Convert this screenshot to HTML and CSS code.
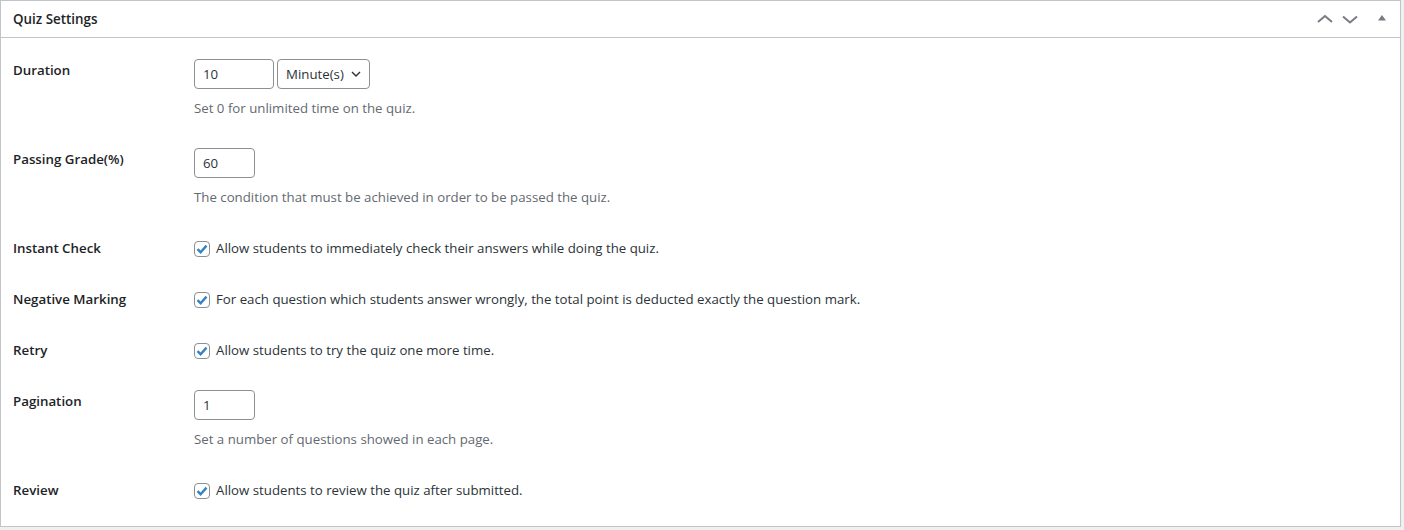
FILE: index.html
```html
<!DOCTYPE html>
<html>
<head>
<meta charset="utf-8">
<link rel="stylesheet" href="styles.css">
</head>
<body>
<div class="postbox">
  <div class="postbox-header">
    <h2 class="hndle">Quiz Settings</h2>
    <div class="handle-actions">
      <svg class="hicon" width="16" height="16" viewBox="0 0 16 16"><path d="M1 11 L8 5 L15 11" fill="none" stroke="#787c82" stroke-width="2"/></svg>
      <svg class="hicon" width="16" height="16" viewBox="0 0 16 16"><path d="M1 5.5 L8 11.5 L15 5.5" fill="none" stroke="#787c82" stroke-width="2"/></svg>
      <svg class="hicon tri" width="10" height="16" viewBox="0 0 10 16"><path d="M1 9.5 L5 4 L9 9.5 Z" fill="#787c82"/></svg>
    </div>
  </div>
  <div class="inside">
    <div class="field">
      <div class="label">Duration</div>
      <div class="control">
        <div class="inline">
          <input class="text w80" type="text" value="10">
          <span class="select">Minute(s)<svg width="10" height="10" viewBox="0 0 10 10"><path d="M1 3 L5 7 L9 3" fill="none" stroke="#2c3338" stroke-width="1.4"/></svg></span>
        </div>
        <p class="desc">Set 0 for unlimited time on the quiz.</p>
      </div>
    </div>
    <div class="field">
      <div class="label">Passing Grade(%)</div>
      <div class="control">
        <input class="text w60" type="text" value="60">
        <p class="desc">The condition that must be achieved in order to be passed the quiz.</p>
      </div>
    </div>
    <div class="field check-row">
      <div class="label">Instant Check</div>
      <label class="control check"><span class="cb"><svg width="14" height="14" viewBox="0 0 14 14"><path d="M2.5 7.2 L5.6 10.2 L11.5 3.6" fill="none" stroke="#3582c4" stroke-width="2.4"/></svg></span>Allow students to immediately check their answers while doing the quiz.</label>
    </div>
    <div class="field check-row">
      <div class="label">Negative Marking</div>
      <label class="control check"><span class="cb"><svg width="14" height="14" viewBox="0 0 14 14"><path d="M2.5 7.2 L5.6 10.2 L11.5 3.6" fill="none" stroke="#3582c4" stroke-width="2.4"/></svg></span>For each question which students answer wrongly, the total point is deducted exactly the question mark.</label>
    </div>
    <div class="field check-row">
      <div class="label">Retry</div>
      <label class="control check"><span class="cb"><svg width="14" height="14" viewBox="0 0 14 14"><path d="M2.5 7.2 L5.6 10.2 L11.5 3.6" fill="none" stroke="#3582c4" stroke-width="2.4"/></svg></span>Allow students to try the quiz one more time.</label>
    </div>
    <div class="field">
      <div class="label">Pagination</div>
      <div class="control">
        <input class="text w60" type="text" value="1">
        <p class="desc">Set a number of questions showed in each page.</p>
      </div>
    </div>
    <div class="field check-row">
      <div class="label">Review</div>
      <label class="control check"><span class="cb"><svg width="14" height="14" viewBox="0 0 14 14"><path d="M2.5 7.2 L5.6 10.2 L11.5 3.6" fill="none" stroke="#3582c4" stroke-width="2.4"/></svg></span>Allow students to review the quiz after submitted.</label>
    </div>
  </div>
</div>
</body>
</html>
```
FILE: styles.css
```css
html, body {
  margin: 0;
  padding: 0;
  background: #f0f0f1;
}
body {
  font-family: "Open Sans", "Noto Sans", sans-serif;
  font-size: 13.25px;
  color: #2c3338;
}
.postbox {
  box-sizing: border-box;
  width: 1401px;
  height: 527px;
  background: #fff;
  border: 1px solid #c3c4c7;
}
.postbox-header {
  height: 36px;
  border-bottom: 1px solid #c3c4c7;
  display: flex;
  align-items: center;
  justify-content: space-between;
}
.hndle {
  margin: 0;
  padding: 0 12px;
  font-size: 13.4px;
  font-weight: 600;
  color: #1d2327;
  line-height: 1.4;
}
.handle-actions {
  display: flex;
  align-items: center;
  padding-right: 13px;
  gap: 9px;
}
.hicon { display: block; }
.tri { margin-left: 10px; }
.inside {
  padding: 21px 12px 0 12px;
  display: flex;
  flex-direction: column;
  gap: 30px;
}
.field {
  display: flex;
  align-items: flex-start;
}
.label {
  width: 181px;
  flex: none;
  font-weight: 600;
  color: #1d2327;
  line-height: 20px;
  padding-top: 1px;
  font-size: 13.3px;
}
.control { display: block; }
.inline { display: flex; gap: 3px; }
.text {
  box-sizing: border-box;
  height: 30px;
  border: 1px solid #8c8f94;
  border-radius: 4px;
  padding: 0 8px;
  font-family: inherit;
  font-size: 13.25px;
  color: #2c3338;
  background: #fff;
  display: block;
  margin: 0;
  outline: none;
}
.w80 { width: 80px; }
.w60 { width: 61px; }
.select {
  box-sizing: border-box;
  height: 30px;
  width: 93px;
  border: 1px solid #8c8f94;
  border-radius: 4px;
  padding: 0 8px 0 8px;
  display: flex;
  align-items: center;
  justify-content: space-between;
  color: #2c3338;
}
.desc {
  margin: 9px 0 0 0;
  line-height: 20px;
  color: #646970;
}
.check-row {
  padding-top: 1px;
  margin-bottom: -1px;
}
.check-row .label, .check { line-height: 21px; }
.check-row .label { padding-top: 0; }
.check {
  display: flex;
  align-items: center;
  gap: 6px;
  color: #2c3338;
}
.cb {
  box-sizing: border-box;
  width: 16px;
  height: 16px;
  border: 1px solid #8c8f94;
  border-radius: 4px;
  display: flex;
  align-items: center;
  justify-content: center;
  background: #fff;
}
.cb svg { display: block; }
```
